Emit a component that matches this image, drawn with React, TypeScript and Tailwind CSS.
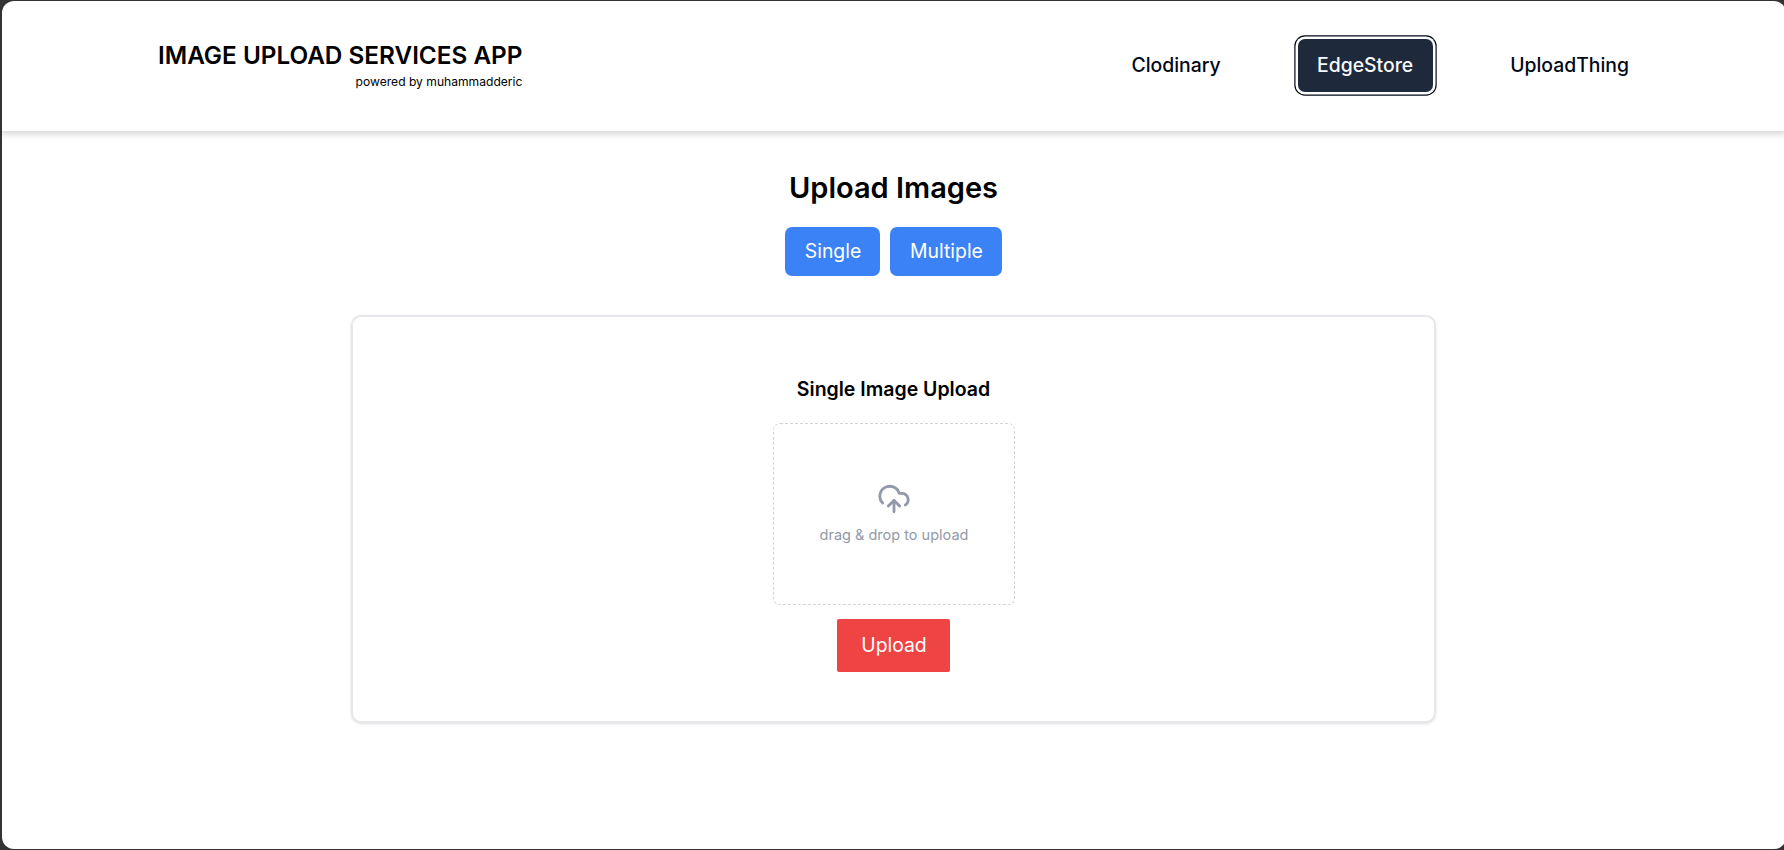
import React from "react";
import { UploadCloud } from "lucide-react";

function Header() {
  return (
    <header className="flex h-[130px] shrink-0 justify-between pl-[156px] pr-[137px] shadow-[0_2px_7px_1px_rgba(0,0,0,0.17)]">
      <div className="flex flex-col items-end pt-[37px]">
        <h1 className="text-[24.3px] leading-[34px] font-semibold whitespace-nowrap">IMAGE UPLOAD SERVICES APP</h1>
        <p className="mt-px text-[12.1px] leading-[18px]">powered by muhammadderic</p>
      </div>
      <nav className="mt-[38px] flex h-[53px] text-[19.36px] font-medium text-[#020817]">
        <a className="mr-[57px] flex items-center px-5">Clodinary</a>
        <a className="mr-[57.5px] flex w-[135px] items-center justify-center rounded-[7px] bg-[#1e293b] text-[#f8fafc] shadow-[0_0_0_2.5px_#fff,0_0_0_3.7px_#020817]">EdgeStore</a>
        <a className="flex items-center px-5">UploadThing</a>
      </nav>
    </header>
  );
}

function DropZone() {
  return (
    <div className="mt-[19px] ml-px flex h-[182px] w-[242px] flex-col items-center justify-center rounded-[7px] border border-dashed border-[#d1d5db] pb-[2px] text-[#9299a8]">
      <UploadCloud size={34} strokeWidth={2} className="mb-[9px]" />
      <span className="text-[14.5px] leading-5">drag &amp; drop to upload</span>
    </div>
  );
}

export default function App() {
  return (
    <div className="h-[850px] w-[1784px] overflow-hidden bg-[#333] pt-px pb-px pl-[2px] font-['Inter',sans-serif] text-black">
      <div className="flex h-full w-[1784px] flex-col overflow-hidden rounded-[12px] bg-white">
        <Header />
        <main className="flex flex-col items-center pt-[37px] pr-px">
          <h2 className="text-[29px] leading-[39px] font-semibold">Upload Images</h2>
          <div className="mt-5 flex gap-[10px] text-[19.36px] text-white">
            <button className="h-[49px] w-[95px] rounded-[7px] bg-[#3b82f6] pl-px">Single</button>
            <button className="h-[49px] w-[112px] rounded-[7px] bg-[#3b82f6] pl-px">Multiple</button>
          </div>
          <section className="mt-[39px] flex h-[408px] w-[1085px] flex-col items-center rounded-[10px] border-2 border-[#e5e7eb] pt-[57px] shadow-sm">
            <h3 className="text-[19.5px] leading-[30px] font-semibold">Single Image Upload</h3>
            <DropZone />
            <button className="mt-[14px] h-[53px] w-[113px] rounded-[2px] bg-[#ef4444] pl-px text-[19.36px] text-white">Upload</button>
          </section>
        </main>
      </div>
    </div>
  );
}
